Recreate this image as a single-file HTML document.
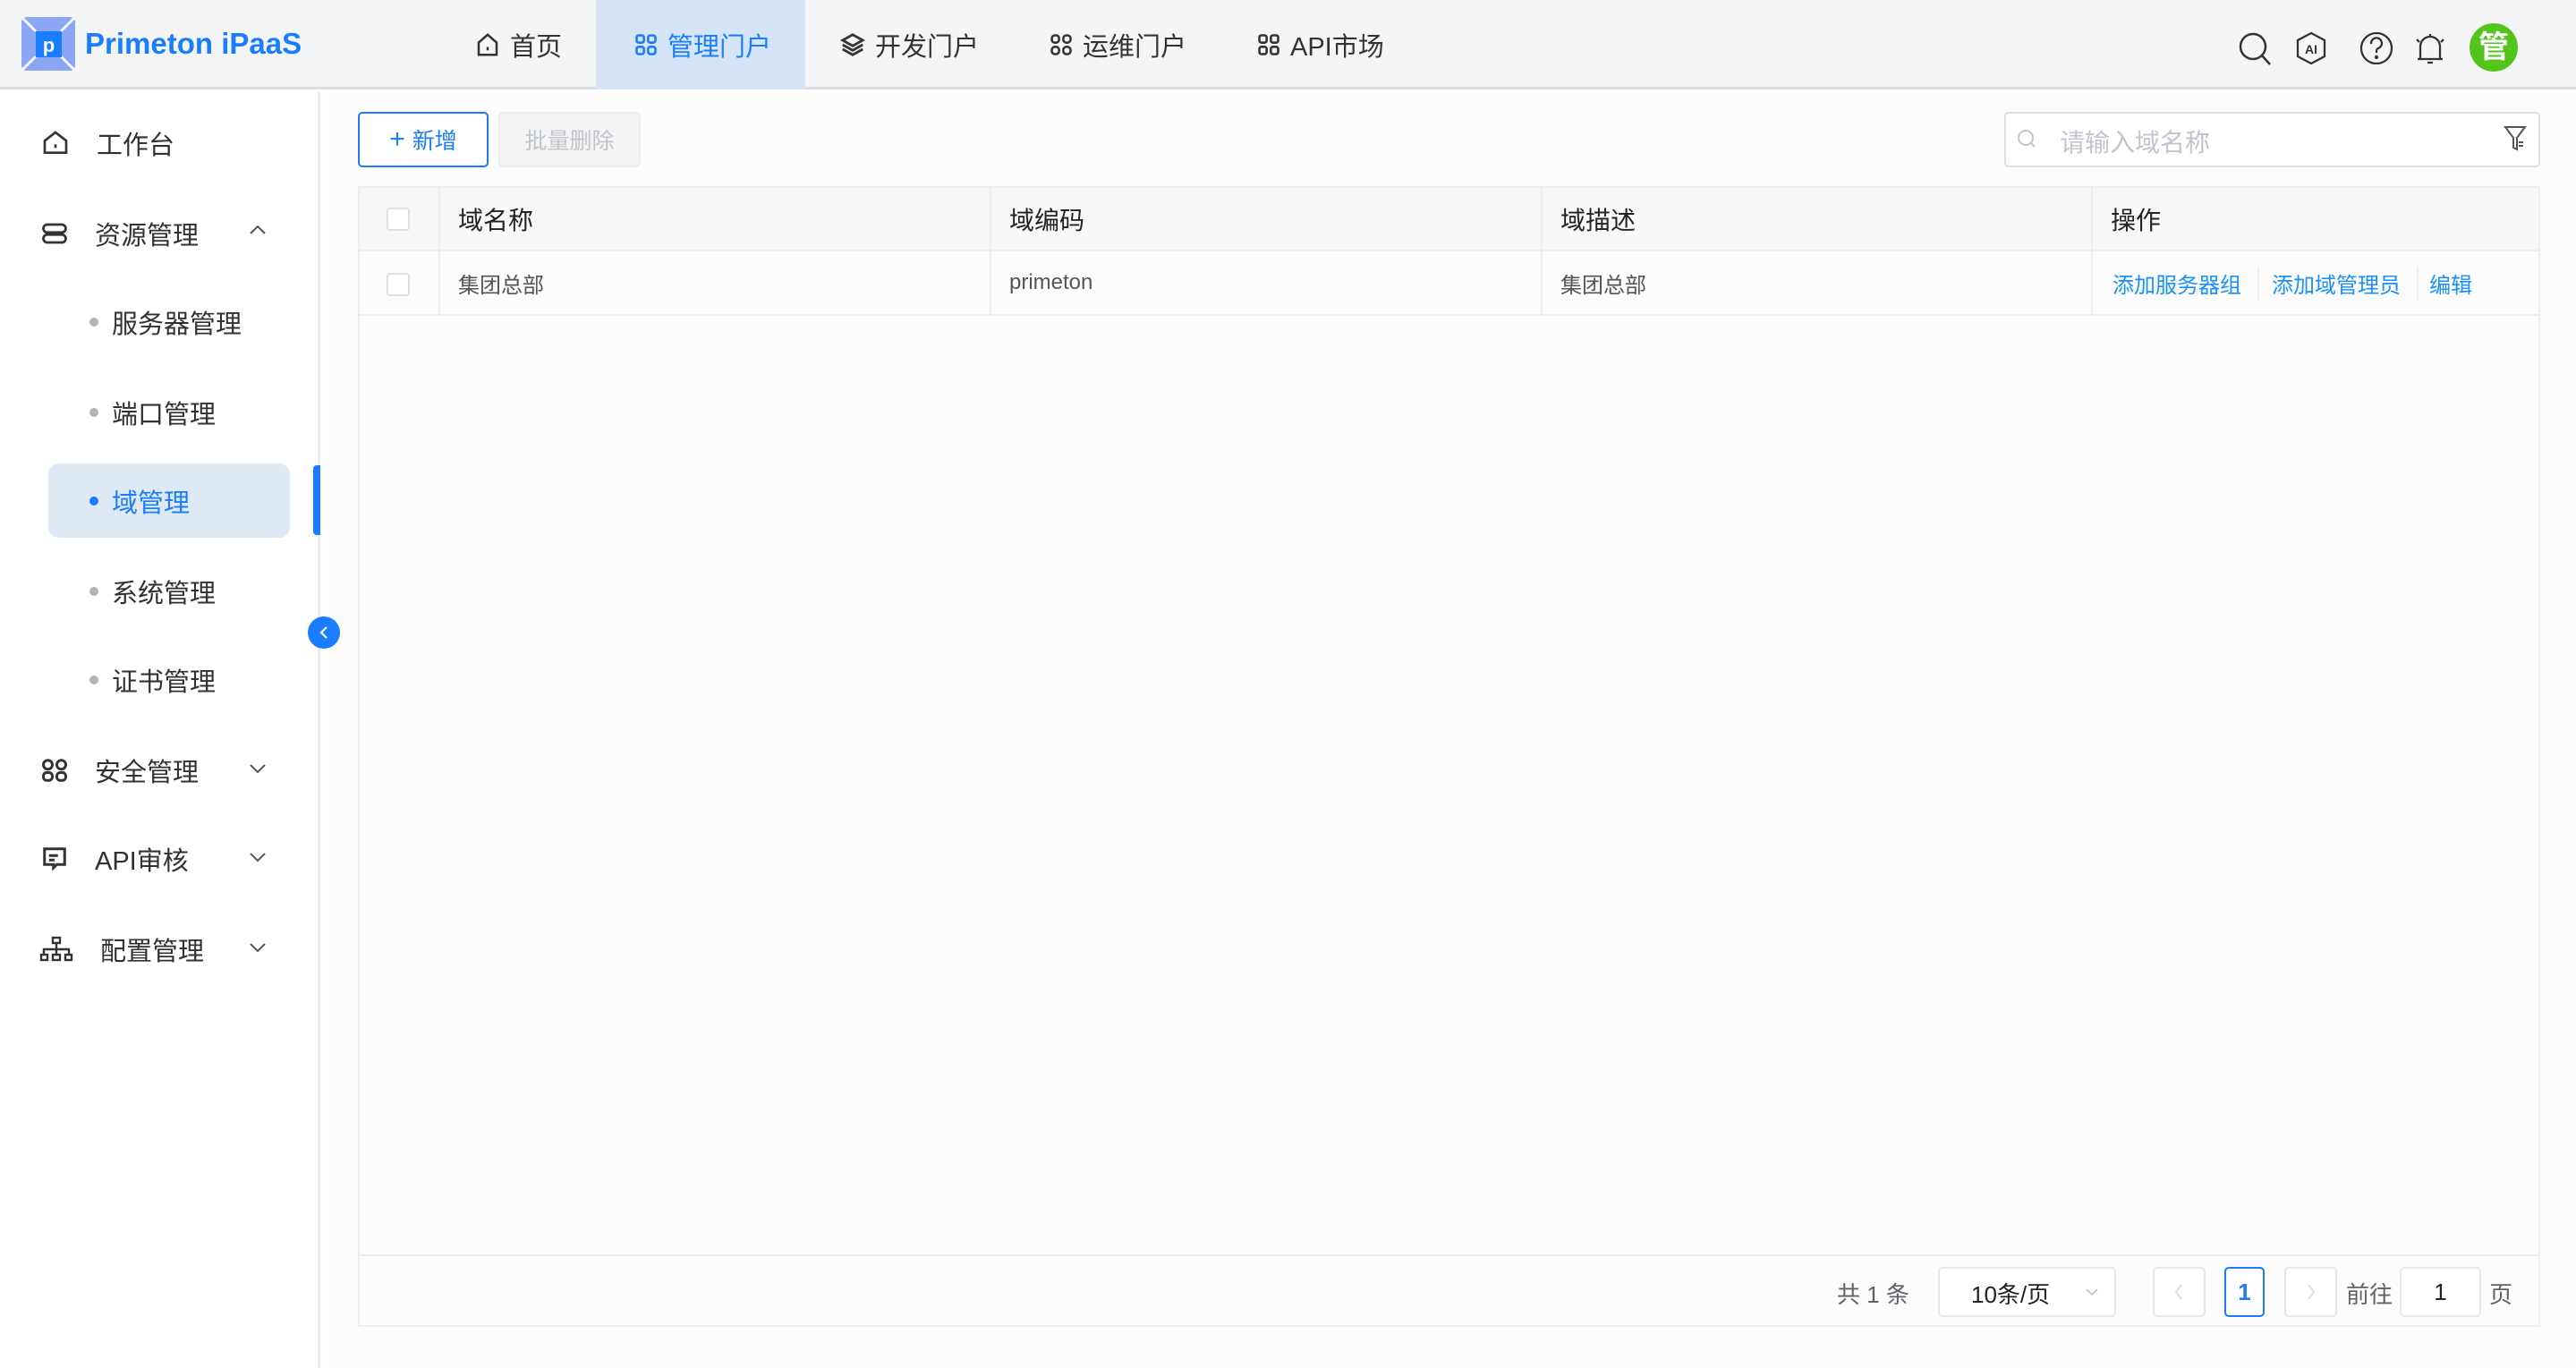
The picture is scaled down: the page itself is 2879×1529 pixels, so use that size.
<!DOCTYPE html>
<html><head><meta charset="utf-8"><style>
*{margin:0;padding:0;box-sizing:border-box}
body{width:2879px;height:1529px;position:relative;overflow:hidden;background:#fff;font-family:"Liberation Sans","Noto Sans CJK SC",sans-serif;color:#303133}
.a{position:absolute}
.hdr{left:0;top:0;width:2879px;height:100px;background:#f4f5f7;border-bottom:3px solid #dcdde0}
.nav{top:0;height:100px;display:flex;align-items:center;font-size:29px;color:#333}
.nav svg{margin-right:10px}
.side{left:0;top:103px;width:358px;height:1426px;background:#fff;border-right:3px solid #ececef}
.si{left:0;height:60px;display:flex;align-items:center;font-size:29px;color:#303133}
.sub{font-size:29px;color:#303133;height:40px;display:flex;align-items:center}
.dot{width:10px;height:10px;border-radius:50%;background:#b3b3b3;position:absolute;left:100px}
.chev{position:absolute;left:278px}
.tbl{left:400px;top:208px;width:2439px;height:1275px;border:2px solid #ebeef3}
.vl{position:absolute;width:2px;background:#ebeef3}
.th{font-size:28px;color:#222}
.td{font-size:24px;color:#555}
.cb{position:absolute;width:26px;height:26px;border:2px solid #dcdfe6;border-radius:4px;background:#fff}
.lnk{color:#1890ff;font-size:24px}
.pb{position:absolute;border:2px solid #e4e7ed;border-radius:5px;background:#fff}
</style></head><body>
<div class="a" style="left:361px;top:103px;width:2518px;height:1426px;background:#fcfcfd"></div>
<div class="a hdr"></div>
<!-- logo -->
<svg class="a" style="left:24px;top:19px" width="60" height="60" viewBox="0 0 60 60">
<rect x="0" y="0" width="60" height="60" rx="6" fill="#8aa6f5"/>
<path d="M0 0L16 16M60 0L44 16M0 60L16 44M60 60L44 44" stroke="#f4f5f7" stroke-width="3"/>
<rect x="16" y="16" width="29" height="29" fill="#1a7dff"/>
<text x="30.5" y="39" font-size="22" font-weight="bold" fill="#fff" text-anchor="middle" font-family="Liberation Sans">p</text>
</svg>
<div class="a" style="left:95px;top:30px;font-size:33px;font-weight:bold;color:#1a7dff">Primeton iPaaS</div>
<div class="a" style="left:666px;top:0;width:234px;height:100px;background:#d5e5f7"></div>
<div class="a nav" style="left:530px"><svg width="30" height="30" viewBox="0 0 24 24" fill="none" stroke="#333" stroke-width="2"><path d="M4 10L12 3L20 10V21H4Z"/><path d="M12 14v3"/></svg>首页</div>
<div class="a nav" style="left:708px;color:#1a7dff"><svg width="28" height="28" viewBox="0 0 24 24" fill="none" stroke="#1a7dff" stroke-width="2.2"><rect x="3" y="3" width="7" height="7" rx="2"/><rect x="14" y="3" width="7" height="7" rx="2"/><rect x="3" y="14" width="7" height="7" rx="2"/><rect x="14" y="14" width="7" height="7" rx="2"/></svg>管理门户</div>
<div class="a nav" style="left:938px"><svg width="30" height="30" viewBox="0 0 24 24" fill="none" stroke="#333" stroke-width="2.2"><path d="M12 3L21 8L12 13L3 8Z"/><path d="M3 12l9 5 9-5M3 16l9 5 9-5"/></svg>开发门户</div>
<div class="a nav" style="left:1172px"><svg width="28" height="28" viewBox="0 0 24 24" fill="none" stroke="#333" stroke-width="2.2"><rect x="3" y="3" width="7" height="7" rx="3"/><rect x="14" y="3" width="7" height="7" rx="3"/><rect x="3" y="14" width="7" height="7" rx="3"/><rect x="14" y="14" width="7" height="7" rx="3"/></svg>运维门户</div>
<div class="a nav" style="left:1404px"><svg width="28" height="28" viewBox="0 0 24 24" fill="none" stroke="#333" stroke-width="2.2"><rect x="3" y="3" width="7" height="7" rx="2"/><rect x="14" y="3" width="7" height="7" rx="2"/><rect x="3" y="14" width="7" height="7" rx="2"/><rect x="14" y="14" width="7" height="7" rx="2"/></svg>API市场</div>
<!-- right icons -->
<svg class="a" style="left:2501px;top:35px" width="40" height="40" viewBox="0 0 40 40" fill="none" stroke="#333" stroke-width="2.5"><circle cx="17" cy="17" r="14"/><path d="M27 27L36 37"/></svg>
<svg class="a" style="left:2564px;top:35px" width="38" height="38" viewBox="0 0 38 38" fill="none" stroke="#333" stroke-width="2.3"><path d="M19 2L34 10V28L19 36L4 28V10Z"/><text x="19" y="25" font-size="14" font-weight="bold" fill="#333" stroke="none" text-anchor="middle" font-family="Liberation Sans">AI</text></svg>
<svg class="a" style="left:2636px;top:34px" width="40" height="40" viewBox="0 0 40 40" fill="none" stroke="#333" stroke-width="2.3"><circle cx="20" cy="20" r="17"/><path d="M14 15a6 6 0 1 1 8 5c-2 1-2 2-2 5"/><circle cx="20" cy="30" r="1" fill="#333"/></svg>
<svg class="a" style="left:2697px;top:34px" width="38" height="42" viewBox="0 0 38 42" fill="none" stroke="#333" stroke-width="2.3"><path d="M8 32V18a11 11 0 0 1 22 0V32H8ZM5 32H33M16 36h6M19 4V7M4 10l3 3M34 10l-3 3"/></svg>
<div class="a" style="left:2760px;top:26px;width:54px;height:54px;border-radius:50%;background:#52c41a;color:#fff;font-size:34px;font-weight:bold;text-align:center;line-height:54px">管</div>
<!-- sidebar -->
<div class="a side"></div>
<div class="a" style="left:54px;top:518px;width:270px;height:83px;background:#dfe9f6;border-radius:12px"></div>
<div class="a" style="left:350px;top:520px;width:8px;height:78px;background:#1a7dff;border-radius:4px 0 0 4px"></div>
<div class="a si" style="top:130px;left:46px"><svg width="32" height="32" viewBox="0 0 24 24" fill="none" stroke="#333" stroke-width="2"><path d="M3 10L12 3L21 10V20H3Z"/><path d="M12 13v3"/></svg><span style="margin-left:30px">工作台</span></div>
<div class="a si" style="top:231px;left:46px"><svg width="30" height="30" viewBox="0 0 24 24" fill="none" stroke="#333" stroke-width="2.2"><rect x="2" y="4" width="20" height="7" rx="3.5"/><rect x="2" y="13" width="20" height="7" rx="3.5"/></svg><span style="margin-left:30px">资源管理</span></div>
<svg class="a chev" style="top:250px" width="20" height="14" viewBox="0 0 20 14" fill="none" stroke="#555" stroke-width="2"><path d="M2 11L10 3L18 11"/></svg>
<div class="dot" style="top:355px"></div><div class="a sub" style="left:125px;top:340px">服务器管理</div>
<div class="dot" style="top:456px"></div><div class="a sub" style="left:125px;top:441px">端口管理</div>
<div class="dot" style="top:555px;background:#1a7dff"></div><div class="a sub" style="left:125px;top:540px;color:#1a7dff">域管理</div>
<div class="dot" style="top:656px"></div><div class="a sub" style="left:125px;top:641px">系统管理</div>
<div class="dot" style="top:755px"></div><div class="a sub" style="left:125px;top:740px">证书管理</div>
<div class="a si" style="top:831px;left:46px"><svg width="30" height="30" viewBox="0 0 24 24" fill="none" stroke="#333" stroke-width="2.4"><rect x="2" y="3" width="8" height="8" rx="4"/><rect x="14" y="3" width="8" height="8" rx="4"/><rect x="2" y="14" width="8" height="7" rx="3"/><rect x="14" y="14" width="8" height="7" rx="3"/></svg><span style="margin-left:30px">安全管理</span></div>
<svg class="a chev" style="top:852px" width="20" height="14" viewBox="0 0 20 14" fill="none" stroke="#555" stroke-width="2"><path d="M2 3L10 11L18 3"/></svg>
<div class="a si" style="top:930px;left:46px"><svg width="30" height="30" viewBox="0 0 24 24" fill="none" stroke="#333" stroke-width="2.4"><path d="M3 3H21V17H14L11 20V17H3Z"/><path d="M7 9h8M7 13h5"/></svg><span style="margin-left:30px">API审核</span></div>
<svg class="a chev" style="top:951px" width="20" height="14" viewBox="0 0 20 14" fill="none" stroke="#555" stroke-width="2"><path d="M2 3L10 11L18 3"/></svg>
<div class="a si" style="top:1031px;left:44px"><svg width="38" height="30" viewBox="0 0 38 30" fill="none" stroke="#333" stroke-width="2.4"><rect x="15" y="2" width="8" height="6"/><rect x="2" y="21" width="7" height="6"/><rect x="15" y="21" width="8" height="6"/><rect x="29" y="21" width="7" height="6"/><path d="M19 8V21M5 21V15H33V21"/></svg><span style="margin-left:30px">配置管理</span></div>
<svg class="a chev" style="top:1052px" width="20" height="14" viewBox="0 0 20 14" fill="none" stroke="#555" stroke-width="2"><path d="M2 3L10 11L18 3"/></svg>
<div class="a" style="left:344px;top:689px;width:36px;height:36px;border-radius:50%;background:#1a7dff;z-index:5"></div>
<svg class="a" style="left:354px;top:698px;z-index:6" width="16" height="18" viewBox="0 0 16 18" fill="none" stroke="#fff" stroke-width="2.2"><path d="M11 3L5 9L11 15"/></svg>
<!-- main -->
<div class="a" style="left:400px;top:125px;width:146px;height:62px;border:2px solid #1a7dff;border-radius:5px;background:#fff;color:#1a7dff;font-size:25px;display:flex;align-items:center;justify-content:center"><span style="font-size:30px;margin-right:8px">+</span>新增</div>
<div class="a" style="left:557px;top:125px;width:159px;height:62px;border:2px solid #ebedf0;border-radius:5px;background:#f4f4f5;color:#c0c4cc;font-size:25px;display:flex;align-items:center;justify-content:center">批量删除</div>
<div class="a" style="left:2240px;top:125px;width:599px;height:62px;border:2px solid #dcdfe6;border-radius:5px;background:#fff"></div>
<svg class="a" style="left:2253px;top:143px" width="24" height="26" viewBox="0 0 24 26" fill="none" stroke="#c0c4cc" stroke-width="2"><circle cx="11" cy="11" r="8"/><path d="M17 17l4 4"/></svg>
<div class="a" style="left:2302px;top:138px;font-size:28px;color:#c0c4cc">请输入域名称</div>
<svg class="a" style="left:2798px;top:140px" width="26" height="30" viewBox="0 0 26 30" fill="none" stroke="#555" stroke-width="2"><path d="M2 2H24L15 14V27L11 25V14Z"/><path d="M17 19h5M17 23h5"/></svg>
<div class="a tbl"></div>
<div class="a" style="left:402px;top:210px;width:2435px;height:71px;background:#f8f8f9;border-bottom:2px solid #ebeef3"></div>
<div class="a" style="left:402px;top:351px;width:2435px;height:2px;background:#ebeef3"></div>
<div class="vl" style="left:490px;top:210px;height:142px"></div>
<div class="vl" style="left:1106px;top:210px;height:142px"></div>
<div class="vl" style="left:1722px;top:210px;height:142px"></div>
<div class="vl" style="left:2337px;top:210px;height:142px"></div>
<div class="cb" style="left:432px;top:232px"></div>
<div class="cb" style="left:432px;top:305px"></div>
<div class="a th" style="left:512px;top:225px">域名称</div>
<div class="a th" style="left:1128px;top:225px">域编码</div>
<div class="a th" style="left:1744px;top:225px">域描述</div>
<div class="a th" style="left:2359px;top:225px">操作</div>
<div class="a td" style="left:512px;top:299px">集团总部</div>
<div class="a td" style="left:1128px;top:302px">primeton</div>
<div class="a td" style="left:1744px;top:299px">集团总部</div>
<div class="a lnk" style="left:2361px;top:299px">添加服务器组</div>
<div class="a" style="left:2523px;top:298px;width:2px;height:38px;background:#ebeef3"></div>
<div class="a lnk" style="left:2539px;top:299px">添加域管理员</div>
<div class="a" style="left:2701px;top:298px;width:2px;height:38px;background:#ebeef3"></div>
<div class="a lnk" style="left:2715px;top:299px">编辑</div>
<!-- footer -->
<div class="a" style="left:402px;top:1402px;width:2435px;height:2px;background:#ebeef3"></div>
<div class="a" style="left:2053px;top:1427px;font-size:26px;color:#606266">共 1 条</div>
<div class="pb" style="left:2166px;top:1416px;width:199px;height:56px"></div>
<div class="a" style="left:2203px;top:1427px;font-size:26px;color:#222">10条/页</div>
<svg class="a" style="left:2330px;top:1438px" width="16" height="12" viewBox="0 0 16 12" fill="none" stroke="#c0c4cc" stroke-width="1.8"><path d="M2 3L8 9L14 3"/></svg>
<div class="pb" style="left:2406px;top:1416px;width:59px;height:56px"></div>
<svg class="a" style="left:2428px;top:1434px" width="14" height="20" viewBox="0 0 14 20" fill="none" stroke="#dcdfe6" stroke-width="2"><path d="M10 2L4 10L10 18"/></svg>
<div class="pb" style="left:2486px;top:1416px;width:45px;height:56px;border-color:#1a7dff;color:#1a7dff;font-size:26px;font-weight:bold;text-align:center;line-height:52px">1</div>
<div class="pb" style="left:2553px;top:1416px;width:59px;height:56px"></div>
<svg class="a" style="left:2576px;top:1434px" width="14" height="20" viewBox="0 0 14 20" fill="none" stroke="#dcdfe6" stroke-width="2"><path d="M4 2L10 10L4 18"/></svg>
<div class="a" style="left:2622px;top:1427px;font-size:26px;color:#606266">前往</div>
<div class="pb" style="left:2682px;top:1416px;width:91px;height:56px;font-size:26px;color:#222;text-align:center;line-height:52px">1</div>
<div class="a" style="left:2782px;top:1427px;font-size:26px;color:#606266">页</div>
</body></html>
